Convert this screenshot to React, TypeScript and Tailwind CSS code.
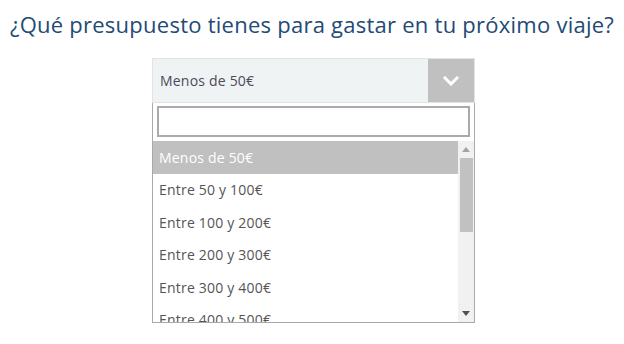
import React from "react";

const items = [
  "Menos de 50€",
  "Entre 50 y 100€",
  "Entre 100 y 200€",
  "Entre 200 y 300€",
  "Entre 300 y 400€",
  "Entre 400 y 500€",
  "Más de 500€",
];

export default function App() {
  return (
    <div className="w-[624px] h-[344px] bg-white flex flex-col items-center" style={{ fontFamily: '"Open Sans", "Liberation Sans", sans-serif' }}>
      <h1 className="mt-[9px] h-[30px] leading-[30px] text-[22px] text-[#234a75] font-normal tracking-[0.25px] whitespace-nowrap">
        ¿Qué presupuesto tienes para gastar en tu próximo viaje?
      </h1>
      <div className="mt-[19px] w-[323px] ml-[3px] flex flex-col">
        <div className="h-[45px] flex border border-[#e1e4e6] bg-[#eff3f4]">
          <div className="flex-1 flex items-center pl-[7px] text-[14px] tracking-[0.2px] text-[#4a4a5a]">Menos de 50€</div>
          <div className="w-[46px] bg-[#c0c0c0] flex items-center justify-center">
            <svg width="16" height="10" viewBox="0 0 16 10" fill="none">
              <path d="M2 2 L8 8 L14 2" stroke="white" strokeWidth="3" strokeLinecap="square" />
            </svg>
          </div>
        </div>
        <div className="h-[220px] border-x border-b border-[#a9a9a9] flex flex-col">
          <div className="px-[4px] pt-[3px] pb-[4px]">
            <div className="h-[31px] border-2 border-[#aaaaaa] bg-white" />
          </div>
          <div className="flex-1 flex overflow-hidden">
            <div className="flex-1 overflow-hidden">
              {items.map((t, i) => (
                <div
                  key={t}
                  className={
                    i === 0
                      ? "h-[32.5px] flex items-center pl-[6px] text-[14px] tracking-[0.2px] bg-[#c0c0c0] text-white"
                      : "h-[32.5px] flex items-center pl-[6px] text-[14px] tracking-[0.2px] text-[#555555]"
                  }
                >
                  {t}
                </div>
              ))}
            </div>
            <div className="w-[16px] bg-[#f1f1f1] flex flex-col items-center">
              <div className="h-[17px] flex items-center justify-center">
                <svg width="8" height="5" viewBox="0 0 8 5"><path d="M0 5 L4 0 L8 5 Z" fill="#a3a3a3" /></svg>
              </div>
              <div className="w-[13px] ml-[1px] h-[74px] bg-[#c1c1c1]" />
              <div className="flex-1" />
              <div className="h-[17px] flex items-center justify-center">
                <svg width="8" height="5" viewBox="0 0 8 5"><path d="M0 0 L8 0 L4 5 Z" fill="#505050" /></svg>
              </div>
            </div>
          </div>
        </div>
      </div>
    </div>
  );
}
